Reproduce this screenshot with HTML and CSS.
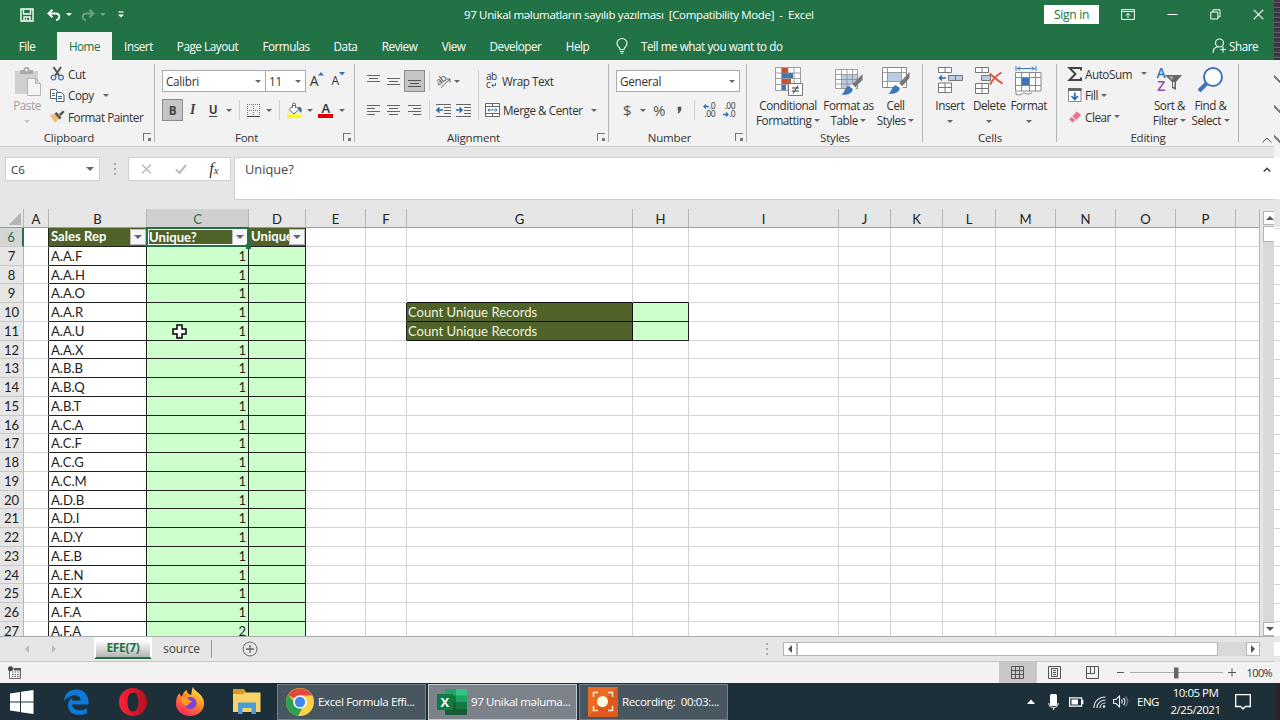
FILE: index.html
```html
<!DOCTYPE html>
<html lang="az">
    <head>
        <meta charset="UTF-8">
        <title>97 Unikal məlumatların sayılıb yazılması</title>
        <link rel="stylesheet" href="styles.css">
    </head>

    <body>
        <div class="screen">
        <div class="window">

            <!-- title bar -->
            <div class="titlebar">
                <div class="quick">
                    <svg width="14" height="14" viewBox="0 0 14 14" fill="none" stroke="#fff" stroke-width="1.4"><path d="M1 1h12v12H1zM3.500 1v5h7V1M4 13V9h6v4M6.500 10.500v2"/></svg>
                    <svg width="14" height="12" viewBox="0 0 14 12" fill="none" stroke="#fff" stroke-width="1.9"><path d="M5.500 .8L1.500 4.500l4 3.700M2 4.500h6.500c5 0 5 6.500 .5 6.500"/></svg>
                    <i class="caret white"></i>
                    <svg class="dim" width="14" height="12" viewBox="0 0 14 12" fill="none" stroke="#fff" stroke-width="1.9"><path d="M8.500 .8l4 3.700-4 3.700M12 4.500H5.500c-5 0-5 6.500-.5 6.500"/></svg>
                    <i class="caret white dim"></i>
                    <svg width="6" height="7" viewBox="0 0 6 7"><path d="M.5 1h5" stroke="#fff" stroke-width="1.2"/><path d="M0 3.500h6L3 6.500z" fill="#fff"/></svg>
                </div>
                <div class="doc_name">97 Unikal məlumatların sayılıb yazılması&nbsp; [Compatibility Mode]&nbsp; -&nbsp; Excel</div>
                <div class="win_buttons">
                    <span class="signin">Sign in</span>
                    <svg width="14" height="11" viewBox="0 0 14 11" fill="none" stroke="#fff"><path d="M.6 .6h12.800v9.800H.6zM.6 2.500h12.800M7 9V4.500M4.800 6.500L7 4.300l2.200 2.200"/></svg>
                    <svg width="11" height="11" viewBox="0 0 11 11" stroke="#fff"><path d="M.5 5.500h10"/></svg>
                    <svg width="11" height="11" viewBox="0 0 11 11" fill="none" stroke="#fff"><path d="M.8 3h7v7h-7zM3 3V.8h7V8H8"/></svg>
                    <svg width="11" height="11" viewBox="0 0 11 11" stroke="#fff" stroke-width="1.200"><path d="M.8 .8l9.400 9.400M10.200 .8L.8 10.200"/></svg>
                </div>
            </div>

            <div class="tabs">
                <span class="file">File</span>
                <span class="active">Home</span>
                <span>Insert</span>
                <span>Page Layout</span>
                <span>Formulas</span>
                <span>Data</span>
                <span>Review</span>
                <span>View</span>
                <span>Developer</span>
                <span>Help</span>
                <svg class="bulb" width="12" height="16" viewBox="0 0 12 16" fill="none" stroke="#fff" stroke-width="1.100"><path d="M4 11.500C4 9 1 8.500 1 5.500a5 5 0 0 1 10 0c0 3-3 3.500-3 6zM4 13.500h4M4.800 15.300h2.400"/></svg>
                <span class="tell">Tell me what you want to do</span>
                <svg class="share_icon" width="15" height="16" viewBox="0 0 15 16" fill="none" stroke="#fff" stroke-width="1.100"><circle cx="7.500" cy="5" r="4"/><path d="M1 15c0-4 2-6 5-6.300M11 8.500v6M8 11.500h6"/></svg>
                <span class="share">Share</span>
            </div>

            <!-- ribbon -->
            <div class="ribbon">
                <div class="group g_clip">
                    <div class="tools">
                        <div class="big paste">
                            <svg width="27" height="29" viewBox="0 0 27 29"><path d="M1 4h23v23H1z" fill="#d0cfd1"/><path d="M6 3h3.500a3 3 0 0 1 6 0H19v4H6z" fill="#aaa"/><circle cx="12.500" cy="3" r="1.200" fill="#f1f1f1"/><path d="M13.500 11.500h8l5 5v12h-13zM21.500 11.500v5h5" fill="#f4f3f6" stroke="#b5b5b5"/></svg>
                            <span>Paste</span>
                            <i class="caret dim"></i>
                        </div>
                        <div class="lines">
                            <div><svg width="15" height="15" viewBox="0 0 15 15" fill="none" stroke="#555" stroke-width="2"><path d="M3.500 1l6 9M11 1L5 10"/><g stroke="#4a78b5" stroke-width="1.300"><circle cx="3.500" cy="11.500" r="2.300"/><circle cx="11" cy="11.500" r="2.300"/></g></svg><span>Cut</span></div>
                            <div><svg width="15" height="13" viewBox="0 0 15 13" fill="#fff" stroke="#666"><path d="M.5 .5h5l2 2v7h-7zM2 4.500h3M2 6.500h3"/><path d="M6.500 3.500h5l2.500 2.500v6.500H6.500zM8 7.500h4M8 9.500h4" stroke="#3d5f8a"/></svg><span>Copy</span><i class="caret far"></i></div>
                            <div><svg width="15" height="13" viewBox="0 0 15 13"><path d="M0 5l5-1 4 5-4 4z" fill="#f0bd77"/><path d="M4.500 3.500l2-1.500 5 5.500-2 2z" fill="#555"/><path d="M9 4l4-3.500 1.500 1.500-3.500 4z" fill="#555"/></svg><span>Format Painter</span></div>
                        </div>
                    </div>
                    <div class="label more"><span>Clipboard</span><i class="launch"></i></div>
                </div>

                <div class="group g_font">
                    <div class="tools rows">
                        <div class="font1">
                            <span class="combo">Calibri<i class="caret"></i></span>
                            <span class="combo">11<i class="caret"></i></span>
                            <span class="grow">A<svg width="6" height="4"><path d="M0 3.500L3 0 6 3.500z" fill="#3d6fae"/></svg></span>
                            <span class="grow small">A<svg width="6" height="4"><path d="M0 0L3 3.500 6 0z" fill="#3d6fae"/></svg></span>
                        </div>
                        <div class="font2">
                            <b class="pressed">B</b>
                            <b class="ital">I</b>
                            <b class="under">U</b>
                            <i class="caret"></i>
                            <i class="sep"></i>
                            <svg width="13" height="13" viewBox="0 0 13 13" stroke="#777"><path d="M0 .5h13M0 6.500h13M.5 0v12M6.500 0v12M12.500 0v12" stroke-dasharray="1 1"/><path d="M0 12.500h13" stroke="#444"/></svg>
                            <i class="caret"></i>
                            <i class="sep"></i>
                            <svg width="16" height="15" viewBox="0 0 16 15"><path d="M2 6.500L7 2l5 4.500-5 4.500z" fill="#fff" stroke="#666"/><path d="M5.500 5V1.500a1.500 1.500 0 0 1 3 0V5" fill="none" stroke="#666"/><path d="M11 4c4-.5 4 2 3.500 5.500C12 9.500 13 7 11 6z" fill="#3d6fae"/><path d="M0 11.500h15V15H0z" fill="#ffff00"/></svg>
                            <i class="caret"></i>
                            <span class="fontcolor">A</span>
                            <i class="caret"></i>
                        </div>
                    </div>
                    <div class="label more"><span>Font</span><i class="launch"></i></div>
                </div>

                <div class="group g_align">
                    <div class="tools rows">
                        <div class="align1">
                            <svg width="13" height="13" stroke="#666"><path d="M0 .5h13M2 3.500h9M0 6.500h13"/></svg>
                            <svg width="13" height="13" stroke="#666"><path d="M0 3.500h13M2 6.500h9M0 9.500h13"/></svg>
                            <span class="pressed"><svg width="13" height="13" stroke="#555"><path d="M0 5.500h13M2 8.500h9M0 11.500h13"/></svg></span>
                            <i class="sep"></i>
                            <svg width="15" height="14" viewBox="0 0 15 14"><text x="1" y="9" transform="rotate(-38 6 8)" font-size="10" fill="#444">ab</text><path d="M5 13.500L14 5M10.500 5H14v3.500" fill="none" stroke="#666"/></svg>
                            <i class="caret"></i>
                            <i class="sep tall"></i>
                            <i></i>
                            <span class="wrap">ab<br>c<svg width="5" height="5" viewBox="0 0 5 5" fill="none" stroke="#3d6fae"><path d="M4.500 0v2.500H1M2.500 .8L.8 2.500l1.700 1.700"/></svg></span>
                            <span class="txt">Wrap Text</span>
                        </div>
                        <div class="align2">
                            <svg width="13" height="11" stroke="#666"><path d="M0 .5h13M0 3.500h8M0 6.500h13M0 9.500h8"/></svg>
                            <svg width="13" height="11" stroke="#666"><path d="M0 .5h13M2 3.500h9M0 6.500h13M2 9.500h9"/></svg>
                            <svg width="13" height="11" stroke="#666"><path d="M0 .5h13M5 3.500h8M0 6.500h13M5 9.500h8"/></svg>
                            <i class="sep"></i>
                            <svg width="15" height="13" viewBox="0 0 15 13" fill="none" stroke="#666"><path d="M0 .5h15M8 3.500h7M8 6.500h7M8 9.500h7M0 12.500h15"/><path d="M7 6H1M3.500 3.500L1 6l2.500 2.500" stroke="#2f68b0" stroke-width="1.600"/></svg>
                            <svg width="15" height="13" viewBox="0 0 15 13" fill="none" stroke="#666"><path d="M0 .5h15M8 3.500h7M8 6.500h7M8 9.500h7M0 12.500h15"/><path d="M0 6h6M3.500 3.500L6 6 3.500 8.500" stroke="#2f68b0" stroke-width="1.600"/></svg>
                            <i></i>
                            <i></i>
                            <svg width="15" height="14" viewBox="0 0 15 14" fill="#fff" stroke="#666"><path d="M.5 .5h14v13H.5zM.5 3.500h14M.5 10.500h14M7.500 .5v3M7.500 10.500v3"/><path d="M3 7h9M4.500 5.500L3 7l1.500 1.500M10.500 5.500L12 7l-1.500 1.500" fill="none" stroke="#3d6fae"/></svg>
                            <span class="txt">Merge &amp; Center</span>
                            <i class="caret"></i>
                        </div>
                    </div>
                    <div class="label more"><span>Alignment</span><i class="launch"></i></div>
                </div>

                <div class="group g_num">
                    <div class="tools rows">
                        <div class="num1"><span class="combo">General<i class="caret"></i></span></div>
                        <div class="num2">
                            <span class="sym">$</span>
                            <i class="caret"></i>
                            <span class="sym pct">%</span>
                            <svg width="5" height="8"><path d="M1 1h3v3L2 7H1l1-3H1z" fill="#555" stroke="#555" stroke-width=".6"/></svg>
                            <i class="sep"></i>
                            <span class="dec"><svg width="6" height="5" fill="none" stroke="#3d6fae" stroke-width="1.300"><path d="M6 2.500H1M3 .5l-2 2 2 2"/></svg>.0<br>.00</span>
                            <span class="dec">.00<br><svg width="6" height="5" fill="none" stroke="#3d6fae" stroke-width="1.300"><path d="M0 2.500h5M3 .5l2 2-2 2"/></svg>.0</span>
                        </div>
                    </div>
                    <div class="label more"><span>Number</span><i class="launch"></i></div>
                </div>

                <div class="group g_styles">
                    <div class="tools">
                        <div class="big">
                            <svg width="29" height="30" viewBox="0 0 29 30"><path d="M1.500 1.500h25v23h-25z" fill="#fff"/><path d="M8 2h6v5H8zM8 13h9v5H8z" fill="#c94f31"/><path d="M8 7h11v5H8zM8 19h4v5H8z" fill="#3e74b8"/><path d="M1.500 1.500h25v23h-25zM1.500 7h25M1.500 12.500h25M1.500 18.500h25M7.500 1.500v23M14 1.500v23M20 1.500v23" fill="none" stroke="#888" stroke-width=".8"/><path d="M14.500 17.500h14v12h-14z" fill="#fff" stroke="#777"/><path d="M18 22h7M18 25h7M24 19.500l-5 8" stroke="#333"/></svg>
                            <span>Conditional<br>Formatting <i class="caret"></i></span>
                        </div>
                        <div class="big">
                            <svg width="28" height="30" viewBox="0 0 28 30"><path d="M.5 3.500h22v19H.5z" fill="#fff"/><path d="M7 9h16v14H7z" fill="#b9cce3"/><path d="M.5 3.500h22v19H.5zM.5 8.500h22M.5 13.500h22M.5 18h22M6.500 3.500v19M12 3.500v19M17.500 3.500v19" fill="none" stroke="#888" stroke-width=".8"/><path d="M27.500 8v6l-8 8-3-3z" fill="#777"/><path d="M17 18l4 4-2 2-4-4z" fill="#fff"/><path d="M14 20l4 4c-3 5-7 5-12 4.500 4-1 3-7 8-8.500z" fill="#3e74b8"/></svg>
                            <span>Format as<br>Table <i class="caret"></i></span>
                        </div>
                        <div class="big">
                            <svg width="28" height="30" viewBox="0 0 28 30"><path d="M.5 1.500h24v20H.5z" fill="#fff" stroke="#888"/><path d="M5.500 6.500h14v9h-14z" fill="#b9cce3"/><path d="M.5 6.500h24M.5 15.500h24M5.500 1.500v20M19.500 1.500v20" stroke="#888" stroke-width=".8"/><path d="M27.500 6v6l-8 9-3-3z" fill="#777"/><path d="M17 17l4 4-2 2-4-4z" fill="#fff"/><path d="M14 19l4 4c-3 5-7 5-12 4.500 4-1 3-7 8-8.500z" fill="#3e74b8"/></svg>
                            <span>Cell<br>Styles <i class="caret"></i></span>
                        </div>
                    </div>
                    <div class="label"><span>Styles</span></div>
                </div>

                <div class="group g_cells">
                    <div class="tools">
                        <div class="big">
                            <svg width="26" height="30" viewBox="0 0 26 30" fill="#fff" stroke="#777"><path d="M1.500 1.500h13v5h-13zM8 1.500v5M1.500 17h13v9.500h-13zM1.500 21.500h13M8 17v9.500"/><path d="M11.500 9.500h14v5h-14zM18.500 9.500v5" fill="#b9cce3"/><path d="M9 12H2.500M5 9.500L2.500 12 5 14.500" fill="none" stroke="#2f68b0" stroke-width="1.500"/></svg>
                            <span>Insert</span>
                            <i class="caret"></i>
                        </div>
                        <div class="big">
                            <svg width="28" height="30" viewBox="0 0 28 30" fill="#fff" stroke="#777"><path d="M.5 1.500h13v5H.5zM7 1.500v5M.5 17.500h13v10H.5zM.5 22.500h13M7 17.500v10"/><path d="M6.500 9.500h9v5h-9z" fill="#b9cce3"/><path d="M14.500 7.500c4 3 8 7 13 10M26.500 6.500c-5 3-9 7-11.500 12" fill="none" stroke="#dc5540" stroke-width="2"/></svg>
                            <span>Delete</span>
                            <i class="caret"></i>
                        </div>
                        <div class="big">
                            <svg width="27" height="30" viewBox="0 0 27 30" fill="none" stroke="#888"><path d="M.5 6.500h25.500V25H.5z" fill="#fff"/><path d="M7 11h7v8H7z" fill="#3e74b8" stroke="none"/><path d="M.5 11.500H26M.5 19.500H26M6.500 6.500V25M14.500 6.500V25M20.500 6.500V25"/><path d="M1 25.500v3c4 1 6 0 8-2 2 2 6 2 8 0" fill="#fff"/><path d="M1 0v5M21 0v5M2 2.500h18M5 .5L3 2.500l2 2M17 .5l2 2-2 2" stroke="#3e74b8"/></svg>
                            <span>Format</span>
                            <i class="caret"></i>
                        </div>
                    </div>
                    <div class="label"><span>Cells</span></div>
                </div>

                <div class="group g_edit">
                    <div class="tools">
                        <div class="lines">
                            <div><svg width="14" height="14" viewBox="0 0 14 14" fill="none" stroke="#444" stroke-width="2"><path d="M13 3.500V1H1.500l6 6-6 6H13v-2.500"/></svg><span>AutoSum</span><i class="caret far"></i></div>
                            <div><svg width="14" height="14" viewBox="0 0 14 14"><path d="M.5 .5h12.500v13H.5z" fill="#fff" stroke="#888"/><path d="M0 0h13.500v3H0z" fill="#666"/><path d="M6.800 4.500v7M3.500 8l3.300 3.500L10 8" fill="none" stroke="#2f68b0" stroke-width="1.800"/></svg><span>Fill</span><i class="caret near"></i></div>
                            <div><svg width="14" height="14" viewBox="0 0 14 14"><path d="M4.500 6L9 1.500l4 3.500-4.500 5z" fill="#e8748c"/><path d="M3.800 7L1 9.500l3.500 3 3-2.500z" fill="#e8748c"/></svg><span>Clear</span><i class="caret near"></i></div>
                        </div>
                        <div class="big">
                            <div class="sort">
                                <span class="az"><b>A</b><b class="z">Z</b></span>
                                <svg width="17" height="15" viewBox="0 0 17 15"><path d="M0 0h17l-6 7v8l-4-2V7z" fill="#666"/><path d="M3.500 1.500h5L7 5z" fill="#aaa"/><path d="M8 7h1.500v5H8z" fill="#eee"/></svg>
                            </div>
                            <span>Sort &amp;<br>Filter <i class="caret"></i></span>
                        </div>
                        <div class="big find">
                            <svg width="27" height="30" viewBox="0 0 27 30"><path d="M10 17l-8 8" stroke="#3e74b8" stroke-width="4"/><circle cx="16" cy="11" r="9" fill="#fff" stroke="#3e74b8" stroke-width="2"/></svg>
                            <span>Find &amp;<br>Select <i class="caret"></i></span>
                        </div>
                    </div>
                    <div class="label"><span>Editing</span></div>
                </div>
                <svg class="collapse" width="10" height="6" fill="none" stroke="#555"><path d="M.5 5.500L5 1l4.500 4.500"/></svg>
            </div>

            <!-- formula bar -->
            <div class="formula">
                <div class="namebox">C6<i class="caret big_caret"></i></div>
                <i class="dots"></i>
                <div class="fx_box">
                    <svg width="11" height="10" stroke="#bbb" stroke-width="1.500"><path d="M1 .5l9 9M10 .5l-9 9"/></svg>
                    <svg width="12" height="10" fill="none" stroke="#bbb" stroke-width="2"><path d="M1 5.500L4.500 9 11 1"/></svg>
                    <span class="fx">f<small>x</small></span>
                </div>
                <div class="input">Unique?<svg width="8" height="5" fill="none" stroke="#444" stroke-width="1.600"><path d="M.8 4.500L4 1.300l3.200 3.200"/></svg></div>
            </div>

            <div class="sheet_area">
                <div class="sheet" id="sheet"></div>
                <div class="vscroll">
                    <span class="sbtn"><i class="tri up"></i></span>
                    <span class="vthumb"></span>
                    <span class="vtrack"></span>
                    <span class="sbtn"><i class="tri down"></i></span>
                </div>
            </div>

            <div class="sheet_tabs">
                <i class="tri left pale"></i>
                <i class="tri right pale"></i>
                <span class="stab on">EFE(7)</span>
                <span class="stab">source</span>
                <svg class="plus" width="16" height="16" fill="none" stroke="#666"><circle cx="8" cy="8" r="7"/><path d="M4 8h8M8 4v8" stroke-width="1.300"/></svg>
                <i class="dots"></i>
                <div class="hscroll">
                    <span class="sbtn"><i class="tri left"></i></span>
                    <span class="hthumb"></span>
                    <span class="sbtn"><i class="tri right"></i></span>
                </div>
            </div>

            <div class="status">
                <svg class="macro" width="13" height="13" viewBox="0 0 13 13"><path d="M2 3h10.500v9.500H1.500V5" fill="#fff" stroke="#666"/><path d="M4 6h8M4 8.500h8M4 10.500h8" stroke="#555" stroke-dasharray="1.500 1"/><path d="M6 2h7v2.500H6z" fill="#555"/><circle cx="2.500" cy="2.800" r="2.500" fill="#444"/></svg>
                <span class="view on"><svg width="13" height="13" fill="none" stroke="#555"><path d="M.5 .5h12v12H.5zM4.500 .5v12M8.500 .5v12M.5 4.500h12M.5 8.500h12"/></svg></span>
                <span class="view"><svg width="13" height="13" fill="none" stroke="#555"><path d="M.5 .5h12v12H.5zM3.500 2.500h6v8h-6zM5 4.500h3M5 6.500h3M5 8.500h3"/></svg></span>
                <span class="view"><svg width="13" height="13" fill="none" stroke="#555"><path d="M.5 .5h12v12H.5zM4.500 .5v7h-4M8.500 .5v7h-4"/></svg></span>
                <svg class="zoom" width="120" height="14" fill="none" stroke="#555"><path d="M0 6.500h7M111 6.500h8M115 2.500v8"/><path d="M13 6.500h93" stroke="#aaa"/><path d="M57 1.500h4.500v11H57z" fill="#666" stroke="none"/></svg>
                <span class="pct100">100%</span>
            </div>
        </div>

        <!-- right edge of the desktop showing behind the window -->
        <div class="edge">
            <div class="edge_top"></div>
            <div class="edge_ribbon"><i></i><i></i><i></i></div>
            <div class="edge_bar"></div>
            <div class="edge_grid"></div>
            <div class="edge_low"></div>
            <div class="edge_status"></div>
        </div>
        </div>

        <div class="taskbar">
            <svg width="24" height="24" viewBox="0 0 24 24" fill="#fff"><path d="M0 3.500l10-1.500v9.500H0zM11 1.800L23.500 0v11.500H11zM0 12.500h10V22L0 20.500zM11 12.500h12.500V24L11 22.200z"/></svg>
            <svg width="26" height="26" viewBox="0 0 26 26"><path d="M1 12C2 4 7 .5 13.500 .5 21 .5 25.500 6 25.500 13v2.500H9c.5 6 9 7.500 15 3.700v5c-9 3.800-19 1-19-7.700 0-4 2-6.500 5-8C9.500 9.500 9 10.500 9 11.500h8.500C17.500 4 7 5 1 12z" fill="#0b7ad8"/></svg>
            <svg width="28" height="28" viewBox="0 0 28 28"><defs><linearGradient id="op" x2="1"><stop offset="0" stop-color="#ff2237"/><stop offset="1" stop-color="#b5101e"/></linearGradient></defs><path d="M14 0a14 14 0 1 0 0 28 14 14 0 1 0 0-28zM14 4.500c3.500 0 5.500 4 5.500 9.500s-2 9.500-5.500 9.500S8.500 19.500 8.500 14 10.500 4.500 14 4.500z" fill="url(#op)" fill-rule="evenodd"/></svg>
            <svg width="30" height="30" viewBox="0 0 30 30"><defs><linearGradient id="ff" x1=".8" y1="0" x2=".2" y2="1"><stop offset="0" stop-color="#fff04a"/><stop offset=".45" stop-color="#ff8a22"/><stop offset="1" stop-color="#fa1e6a"/></linearGradient></defs><path d="M18 0c1 4 10 7 11 15 1 8-6 14-14 14S0 23 1 15c.3-4 1.500-7 3.500-9 .5 2 1 3 2.500 3.500C8 6 9.500 4 12 3c0 3 1 4 4 5 1-3 .5-5 2-8z" fill="url(#ff)"/><circle cx="15.500" cy="16" r="6" fill="#7a42d6"/><path d="M5 12c4-3 8-1 9 1 2 .5 3 1 3 2-2 1-3 1-4 3-2 2-5 0-8-6z" fill="#ff9a26"/></svg>
            <svg width="28" height="25" viewBox="0 0 28 25"><path d="M0 1h11l2 2.500h14.500V23H0z" fill="#f9d266"/><path d="M0 0h11l1.500 3L10 5H0z" fill="#d79b22"/><path d="M5 13.500h18V25h-4.500v-6h-9v6H5z" fill="#4a9bd8"/></svg>
            <div class="app"><svg width="28" height="28" viewBox="0 0 28 28"><circle cx="14" cy="14" r="14" fill="#fdd04a"/><path d="M14 14L2 7A14 14 0 0 1 26.200 7.500H14z" fill="#df4a3c"/><path d="M2 6.800a14 14 0 0 0 10 21.100L18 17l-8-1z" fill="#2ea150"/><circle cx="14" cy="14" r="6.800" fill="#fff"/><circle cx="14" cy="14" r="5.200" fill="#4585ee"/></svg><span>Excel Formula Effi...</span></div>
            <div class="app on"><svg width="30" height="28" viewBox="0 0 30 28"><path d="M8 1h22v26H8z" fill="#21a366"/><path d="M19 1h11v6.500H19z" fill="#33c481"/><path d="M8 7.500h11V14H8z" fill="#107c41"/><path d="M8 14h11v13H8z" fill="#185c37"/><path d="M19 14h11v6.500H19z" fill="#107c41"/><path d="M19 20.500h11V27H19z" fill="#185c37"/><path d="M0 6h16v16H0z" fill="#107c41"/><text x="3.500" y="18.500" font-size="13" font-weight="bold" fill="#fff">X</text></svg><span>97 Unikal məluma...</span></div>
            <div class="app"><svg width="30" height="30" viewBox="0 0 30 30"><path d="M0 0h30v30H0z" fill="#ec6b22"/><path d="M0 30L30 0v30z" fill="#e0581c"/><path d="M5.500 10V5.500H10M20 5.500h4.500V10M24.500 19v4.500H20M10 23.500H5.500V19" fill="none" stroke="#ffe9d2" stroke-width="1.500"/><circle cx="14.500" cy="14.500" r="5.500" fill="#fff8e2"/></svg><span>Recording:&nbsp; 00:03:...</span></div>
            <div class="tray">
                <svg width="8" height="5"><path d="M0 5l4-4.500L8 5z" fill="#fff"/></svg>
                <svg width="11" height="16" viewBox="0 0 11 16"><rect x="2" width="7" height="12" rx="1.500" fill="#fff"/><path d="M.7 9c0 6 9.600 6 9.600 0M5.500 13v3" fill="none" stroke="#ddd" stroke-width="1.200"/></svg>
                <svg width="15" height="10" viewBox="0 0 15 10"><path d="M.6 .8h12v8.400H.6zM13.800 3v4" fill="none" stroke="#fff" stroke-width="1.200"/><path d="M2.500 2.500H9v5H2.500z" fill="#fff"/></svg>
                <svg width="13" height="12" viewBox="0 0 13 12" fill="none" stroke="#ddd" stroke-width="1.200"><path d="M1 12C1 5 6 1 12.500 1M4 12c0-5 4-8 8.500-8M7 12c0-3 2.500-5 5.500-5"/><circle cx="11" cy="10.500" r="1.200" fill="#fff" stroke="none"/></svg>
                <svg width="15" height="13" viewBox="0 0 15 13" fill="none" stroke="#eee" stroke-width="1.100"><path d="M.6 4.500H3L6.500 1v11L3 8.500H.6zM8.500 4.500c1 1 1 3 0 4M10.500 3c2 2 2 5 0 7"/><path d="M12.500 1.500c3 3 3 7 0 10" stroke="#778"/></svg>
                <span class="lang">ENG</span>
                <span class="clock">10:05 PM<br>2/25/2021</span>
                <svg width="16" height="16" viewBox="0 0 16 16" fill="none" stroke="#fff" stroke-width="1.300"><path d="M.7 .7h14.600v11.800h-5L8 15l-2.300-2.500h-5z"/></svg>
            </div>
        </div>

        <svg class="cursor" width="15" height="15" viewBox="0 0 15 15"><path d="M5 1h5v4h4v5h-4v4H5v-4H1V5h4z" fill="#fff" stroke="#000" stroke-width="1.500"/></svg>

        <script src="sheet.js"></script>
    </body>
</html>
```
FILE: sheet.js
```js
var cols = ['A','B','C','D','E','F','G','H','I','J','K','L','M','N','O','P',''];
var reps = ['A.A.F','A.A.H','A.A.O','A.A.R','A.A.U','A.A.X','A.B.B','A.B.Q','A.B.T','A.C.A','A.C.F',
            'A.C.G','A.C.M','A.D.B','A.D.I','A.D.Y','A.E.B','A.E.N','A.E.X','A.F.A','A.F.A'];
var heads = {B: 'Sales Rep', C: 'Unique?', D: 'Unique?'};

var sheet = document.getElementById('sheet');

function addRow(cls, first, fill){
    var row = document.createElement('div');
    row.className = 'row ' + cls;
    var num = document.createElement('div');
    num.className = 'num';
    num.textContent = first;
    row.appendChild(num);
    cols.forEach(function(c){
        var cell = document.createElement('div');
        cell.className = 'cell';
        fill(cell, c);
        row.appendChild(cell);
    });
    sheet.appendChild(row);
}

addRow('letters', '', function(cell, c){
    cell.textContent = c;
    if(c == 'C') cell.classList.add('sel');
});

for(var r = 6; r <= 27; r++){
    addRow(r == 6 ? 'first' : '', r, function(cell, c){
        if(r == 6 && heads[c]){
            cell.classList.add('head');
            cell.innerHTML = '<span>' + heads[c] + '</span><em><i class="caret"></i></em>';
            if(c == 'C') cell.classList.add('picked');
        }else if(c == 'B'){
            cell.classList.add('rep');
            cell.textContent = reps[r - 7];
        }else if(c == 'C'){
            cell.classList.add('green', 'count');
            cell.textContent = r == 27 ? 2 : 1;
        }else if(c == 'D'){
            cell.classList.add('green');
        }
        if(c == 'A') cell.classList.add('before');
        if(r == 10 || r == 11){
            if(c == 'G'){
                cell.classList.add('total');
                cell.textContent = 'Count Unique Records';
            }
            if(c == 'H') cell.classList.add('green');
            if(c == 'F') cell.classList.add('before');
        }
        if(r == 9 && (c == 'G' || c == 'H')) cell.classList.add('above');
    });
}
```
FILE: styles.css
```css
* {
    box-sizing: border-box;
}
body {
    margin: 0;
    width: 1280px;
    height: 720px;
    overflow: hidden;
    background-color: #e6e6e6;
    font-family: "Open Sans", "Noto Sans", sans-serif;
    font-size: 12px;
    color: #333;
}
svg {
    display: block;
    flex: none;
    overflow: visible;
}
i {
    font-style: normal;
}
.screen {
    display: flex;
    height: 683px;
}
.window {
    width: 1274px;
}

/* small pieces */
.caret {
    display: inline-block;
    flex: none;
    width: 0;
    height: 0;
    border: 3px solid transparent;
    border-top: 3px solid #666;
    border-bottom: 0;
}
.caret.white {
    border-top-color: #fff;
}
.dim {
    opacity: 0.35;
}
.caret.big_caret {
    border-width: 4px 4px 0;
}
.tri {
    border: 4px solid transparent;
}
.up { border-bottom-color: #555; border-top: 0; }
.down { border-top-color: #555; border-bottom: 0; }
.left { border-right-color: #555; border-left: 0; }
.right { border-left-color: #555; border-right: 0; }
.pale {
    opacity: 0.3;
}
.dots {
    width: 2px;
    height: 12px;
    background: repeating-linear-gradient(#aaa 0 2px, transparent 2px 5px);
}

/* title bar */
.titlebar {
    display: flex;
    align-items: center;
    height: 32px;
    padding-bottom: 3px;
    background-color: #217346;
    color: #fff;
}
.quick {
    display: grid;
    grid-template-columns: 40px 14px 16px 22px 8px 28px;
    justify-items: center;
    align-items: center;
    width: 464px;
    padding-left: 7px;
}
.doc_name {
    width: 580px;
    font-size: 11.5px;
    letter-spacing: -0.34px;
    white-space: nowrap;
}
.win_buttons {
    display: grid;
    grid-template-columns: 55px 58px 30px 56px 30px;
    justify-items: center;
    align-items: center;
}
.signin {
    width: 55px;
    height: 19px;
    line-height: 20px;
    text-align: center;
    background-color: #fff;
    color: #217346;
    letter-spacing: -0.3px;
}
.tabs {
    display: grid;
    grid-template-columns: 57px 55px 53px 85px 72px 47px 61px 47px 77px 47px 40px 571px 17px 29px;
    height: 28px;
    line-height: 28px;
    background-color: #217346;
    color: #fff;
    text-align: center;
    font-size: 11.7px;
    letter-spacing: -0.45px;
}
.tabs .file {
    padding-right: 3px;
}
.tabs .active {
    background-color: #f3f2f2;
    color: #217346;
}
.tabs .bulb {
    margin: 6px 0 0 15px;
}
.tabs .tell {
    text-align: left;
}
.tabs .share_icon {
    margin: 6px 0 0 0;
}

/* ribbon */
.ribbon {
    display: flex;
    align-items: flex-start;
    height: 87px;
    background-color: #f2f2f2;
    border-bottom: 1px solid #cfcfcf;
    font-size: 11.7px;
    letter-spacing: -0.45px;
}
.group {
    height: 86px;
    display: flex;
    flex-direction: column;
    flex: none;
    background: linear-gradient(#b5b5b5, #b5b5b5) right 4px / 1px 78px no-repeat;
}
.g_clip { width: 155px; }
.g_font { width: 200px; }
.g_align { width: 254px; }
.g_num { width: 138px; }
.g_styles { width: 176px; }
.g_cells { width: 134px; }
.g_edit { width: 182px; }
.tools {
    display: flex;
    height: 70px;
}
.label {
    display: flex;
    align-items: center;
    height: 18px;
    text-align: center;
    font-size: 11.5px;
    letter-spacing: -0.2px;
}
.label.more {
    padding-right: 4px;
}
.label span {
    flex: 1;
}
.label.more span {
    padding-right: 5px;
}
.launch {
    width: 8px;
    height: 8px;
    border: 1px solid #777;
    border-width: 1px 0 0 1px;
    background: conic-gradient(from 0deg at 4px 4px, transparent 25%, #777 0 50%, transparent 0);
}
.big {
    display: flex;
    flex-direction: column;
    align-items: center;
    text-align: center;
    line-height: 15px;
    white-space: nowrap;
    padding-top: 6px;
}
.big > span {
    margin-top: 2px;
}
.big span .caret {
    vertical-align: 3px;
}
.big > .caret {
    margin-top: 7px;
}
.paste {
    width: 50px;
    padding: 7px 0 0 4px;
}
.paste span {
    color: #a0a0a0;
}
.lines {
    padding-top: 3px;
}
.lines div {
    display: flex;
    align-items: center;
    height: 21.5px;
    white-space: nowrap;
}
.lines span {
    margin-left: 3px;
}
.far {
    margin-left: 9px;
}
.near {
    margin-left: 3px;
}
.rows {
    flex-direction: column;
    padding: 10px 0 0 7px;
    gap: 7px;
}
.rows > div {
    display: grid;
    grid-template-rows: 22px;
    height: 22px;
    align-items: center;
    justify-items: center;
}
.rows > .font1 {
    grid-template-columns: 104px 40px 22px 20px;
}
.rows > .font2 {
    grid-template-columns: 21px 19px 22px 10px 11px 17px 14px 7px 23px 7px 25px 7px;
}
.rows > .align1 {
    grid-template-columns: 22px 19px 22px 8px 20px 8px 18px 6px 14px 60px;
}
.rows > .align2 {
    grid-template-columns: 22px 19px 22px 8px 20px 21px 5px 6px 15px 88px 12px;
}
.rows > .num1 {
    grid-template-columns: 124px;
}
.rows > .num2 {
    grid-template-columns: 22px 9px 24px 16px 14px 15px 25px;
}
.combo {
    display: flex;
    align-items: center;
    justify-content: space-between;
    width: 100%;
    height: 22px;
    padding: 0 4px 0 3px;
    background-color: #fff;
    border: 1px solid #ababab;
    letter-spacing: -0.25px;
}
.combo + .combo {
    border-left: 0;
}
.grow {
    display: flex;
    font-size: 14px;
    line-height: 18px;
}
.grow.small {
    font-size: 12px;
}
.pressed {
    display: flex;
    align-items: center;
    justify-content: center;
    width: 21px;
    height: 22px;
    background-color: #c5c5c5;
    border: 1px solid #8c8c8c;
}
.font2 b {
    color: #444;
}
.ital {
    font-family: "Liberation Serif", serif;
    font-style: italic;
    font-size: 14px;
}
.under {
    line-height: 13px;
    border-bottom: 1px solid #444;
}
.sep {
    width: 1px;
    height: 20px;
    background-color: #d0d0d0;
}
.sep.tall {
    align-self: start;
    justify-self: end;
    height: 50px;
}
.fontcolor {
    width: 15px;
    height: 16px;
    line-height: 12px;
    font-size: 13px;
    font-weight: 600;
    text-align: center;
    border-bottom: 4px solid #e00000;
}
.wrap {
    width: 12px;
    font-size: 10px;
    line-height: 8px;
    padding-bottom: 2px;
}
.wrap svg,
.dec svg {
    display: inline-block;
    margin-left: 1px;
}
.dec {
    font-size: 8.5px;
    line-height: 8px;
    text-align: right;
    white-space: nowrap;
}
.txt {
    justify-self: start;
    padding-left: 3px;
    white-space: nowrap;
}
.sym {
    font-size: 15px;
    line-height: 20px;
    color: #555;
}
.g_styles .tools {
    padding-left: 5px;
}
.g_styles .big:nth-child(1) { width: 72px; }
.g_styles .big:nth-child(2) { width: 49px; }
.g_styles .big:nth-child(3) { width: 45px; }
.g_cells .tools {
    padding-left: 7px;
}
.g_cells .big {
    width: 39.5px;
}
.g_edit .lines {
    width: 92px;
    padding-left: 11px;
}
.g_edit .big {
    width: 41px;
}
.g_edit .lines .far {
    margin-left: 9px;
}
.sort {
    display: flex;
    height: 30px;
}
.sort svg {
    margin-top: 9px;
}
.az {
    display: flex;
    flex-direction: column;
    font-size: 14px;
    line-height: 13px;
    color: #3e74b8;
}
.az b {
    font-weight: 600;
}
.z {
    color: #8b4fa8;
}
.collapse {
    margin: 77px 0 0 23px;
}

/* formula bar */
.formula {
    display: flex;
    height: 62px;
    padding: 10px 0 0 5px;
}
.namebox {
    display: flex;
    align-items: center;
    justify-content: space-between;
    width: 95px;
    height: 24px;
    padding: 0 5px;
    background-color: #fff;
    border: 1px solid #d0d0d0;
    font-size: 11.5px;
}
.formula .dots {
    margin: 6px 12px 0 14px;
}
.fx_box {
    display: grid;
    grid-template-columns: 34px 35px 32px;
    align-items: center;
    justify-items: center;
    width: 103px;
    height: 24px;
    background-color: #fff;
    border: 1px solid #d0d0d0;
}
.fx {
    font-family: "Liberation Serif", serif;
    font-style: italic;
    font-size: 16px;
    line-height: 18px;
}
.fx small {
    font-size: 11px;
}
.input {
    display: flex;
    justify-content: space-between;
    flex: 1;
    height: 43px;
    margin-left: 3px;
    padding: 3px 3px 0 10px;
    background-color: #fff;
    border: 1px solid #d0d0d0;
    border-right: 0;
    font-size: 12.8px;
    line-height: 17px;
    color: #444;
}
.input svg {
    margin-top: 6px;
}

/* cells */
.sheet_area {
    display: flex;
    height: 427px;
}
.sheet {
    width: 1260px;
    height: 427px;
    overflow: hidden;
    font-family: Lato, "Noto Sans", sans-serif;
    font-size: 13.1px;
    color: #222;
    border-right: 1px solid #b5b5b5;
}
.row {
    display: grid;
    grid-template-columns: 24px 25px 98px 102px 57px 60px 41px 226px 56px 150px 52px 52px 53px 60px 60px 60px 60px 24px;
    grid-template-rows: 100%;
    height: 18.75px;
    line-height: 19px;
}
.num {
    background-color: #e6e6e6;
    border-right: 1px solid #b5b5b5;
    border-bottom: 1px solid #c9c9c9;
    text-align: center;
    overflow: hidden;
}
.cell {
    background-color: #fff;
    border-right: 1px solid #d4d4d4;
    border-bottom: 1px solid #d4d4d4;
    white-space: nowrap;
    overflow: hidden;
}
.letters {
    height: 19px;
    line-height: 20px;
    text-align: center;
}
.letters .num {
    background: linear-gradient(135deg, transparent 0 50%, #b5b5b5 50%) 9px 4px / 12px 12px no-repeat #e6e6e6;
    border-bottom-color: #9b9b9b;
}
.letters .cell {
    background-color: #e6e6e6;
    border-right-color: #b5b5b5;
    border-bottom-color: #9b9b9b;
}
.letters .sel {
    background-color: #d0d0d0;
    color: #217346;
    border-bottom-color: #217346;
}
.first .num {
    background-color: #d5d5d5;
    color: #217346;
    border-right: 2px solid #217346;
}
.cell.before {
    border-right-color: #222;
}
.cell.above {
    border-bottom-color: #111;
}
.cell.rep {
    padding-left: 2px;
    border-color: #222;
}
.cell.green {
    background-color: #ccffcc;
    border-color: #222;
}
.count {
    text-align: right;
    padding-right: 2px;
}
.cell.total {
    padding-left: 1px;
    background-color: #4f6228;
    color: #f0f3e0;
    border-color: #111;
}
.cell.head {
    display: flex;
    align-items: center;
    justify-content: space-between;
    padding: 0 0 0 2px;
    background-color: #4f6228;
    border-color: #222;
    color: #fff;
    font-weight: bold;
    position: relative;
}
.head span {
    overflow: hidden;
}
.head em {
    display: flex;
    flex: none;
    align-items: center;
    justify-content: center;
    width: 16px;
    height: 16px;
    background-color: #f6f6fa;
    border: 1px solid #bbb;
}
.head .caret {
    border-width: 4px 4px 0;
}
.cell.picked {
    overflow: visible;
    padding-right: 1px;
    border-right: 0;
    border-bottom: 0;
}
.picked::before {
    content: "";
    position: absolute;
    inset: -1px 0 0 -1px;
    border: 2px solid #217346;
    box-shadow: inset 0 0 0 1px #fff;
}
.picked::after {
    content: "";
    position: absolute;
    right: -2px;
    bottom: -2px;
    width: 5px;
    height: 5px;
    z-index: 1;
    background-color: #217346;
}
.vscroll {
    display: flex;
    flex-direction: column;
    width: 14px;
    padding: 2px 0 0 3px;
}
.sbtn {
    display: flex;
    align-items: center;
    justify-content: center;
    flex: none;
    width: 14px;
    height: 14px;
    background-color: #fff;
    border: 1px solid #b5b5b5;
}
.vscroll .sbtn {
    width: 11px;
    border-right: 0;
    padding-left: 2px;
}
.vthumb {
    height: 16px;
    margin-top: 1px;
    background-color: #fff;
    border: 1px solid #b5b5b5;
    border-right: 0;
}
.vtrack {
    flex: 1;
    background-color: #d9d9d9;
}

/* sheet tabs */
.sheet_tabs {
    display: flex;
    align-items: center;
    height: 26px;
    border-top: 1px solid #ababab;
    border-bottom: 1px solid #c6c6c6;
    padding-left: 25px;
}
.sheet_tabs > .right {
    margin: 0 38px 0 23px;
}
.stab {
    width: 60px;
    height: 18px;
    line-height: 17px;
    text-align: center;
    font-size: 12px;
    color: #444;
    border-right: 1px solid #999;
    letter-spacing: -0.15px;
}
.stab.on {
    align-self: flex-start;
    width: 58px;
    height: 22px;
    line-height: 22px;
    font-weight: bold;
    letter-spacing: -0.3px;
    color: #217346;
    background: linear-gradient(#fff 15%, #b5b5b5);
    border: 2px solid #fff;
    border-top: 0;
    border-bottom-color: #217346;
}
.plus {
    margin-left: 30px;
}
.sheet_tabs .dots {
    margin: 0 15px 0 508px;
}
.hscroll {
    display: flex;
    justify-content: space-between;
    width: 477px;
    background-color: #d9d9d9;
}
.hthumb {
    width: 421px;
    margin-right: auto;
    background-color: #fff;
    border: 1px solid #b5b5b5;
}
.sheet_tabs .tri {
    flex: none;
}

.status {
    display: flex;
    align-items: center;
    height: 21px;
    background-color: #f2f2f2;
    font-size: 11px;
}
.macro {
    margin: 0 978px 0 8px;
}
.view {
    display: flex;
    align-items: center;
    justify-content: center;
    width: 37.5px;
    height: 21px;
    padding-right: 1px;
}
.view.on {
    background-color: #c8c8c8;
}
.zoom {
    margin-left: 5px;
}
.pct100 {
    margin-left: 10px;
    letter-spacing: -0.6px;
}

/* desktop edge */
.edge {
    width: 6px;
}
.edge_top {
    height: 60px;
    background: repeating-linear-gradient(#4b3450 0 2px, #6b5a68 2px 3px, #2c3a3c 3px 5px);
}
.edge_ribbon {
    display: flex;
    flex-direction: column;
    height: 97px;
    padding-top: 14px;
    gap: 20px;
    background-color: #f2f2f2;
}
.edge_ribbon i {
    width: 6px;
    height: 10px;
    background: linear-gradient(45deg, transparent 40%, #877 40% 60%, transparent 60%);
}
.edge_bar {
    height: 53px;
    background: linear-gradient(#fff 42px, #e6e6e6 42px);
}
.edge_grid {
    height: 426px;
    background: linear-gradient(#e6e6e6 17px, transparent 17px), repeating-linear-gradient(#fff 0 17.75px, #d4d4d4 17.75px 18.75px);
}
.edge_low {
    height: 26px;
    background: linear-gradient(#fff, #fff) 0 6px / 6px 14px no-repeat #e6e6e6;
}
.edge_status {
    height: 21px;
    background-color: #f2f2f2;
}

/* taskbar */
.taskbar {
    display: flex;
    align-items: center;
    height: 37px;
    padding-left: 10px;
    background-color: #1d2f39;
    border-right: 4px solid #2a2428;
    color: #fff;
}
.taskbar > svg {
    margin-right: 28px;
}
.taskbar > svg:nth-child(1) { margin-right: 29px; }
.taskbar > svg:nth-child(2) { margin-right: 30px; }
.taskbar > svg:nth-child(5) { margin-right: 16px; }
.app {
    display: flex;
    align-items: center;
    flex: none;
    width: 149px;
    height: 36px;
    margin-right: 2px;
    padding-left: 8px;
    background-color: #48565f;
    border: 1px solid #71808a;
    font-size: 11.5px;
    letter-spacing: -0.35px;
    white-space: nowrap;
}
.app span {
    margin-left: 4px;
}
.app.on {
    background-color: #7b828a;
    border-color: #c5ccd2;
}
.tray {
    display: grid;
    grid-template-columns: 22px 22px 25px 21px 21px 34px 61px 34px;
    align-items: center;
    justify-items: center;
    margin-left: auto;
    margin-right: 16px;
    font-size: 11.5px;
    letter-spacing: -0.5px;
}
.clock {
    text-align: center;
    line-height: 16.5px;
}

/* mouse pointer */
.cursor {
    position: absolute;
    left: 172px;
    top: 324px;
}
```
